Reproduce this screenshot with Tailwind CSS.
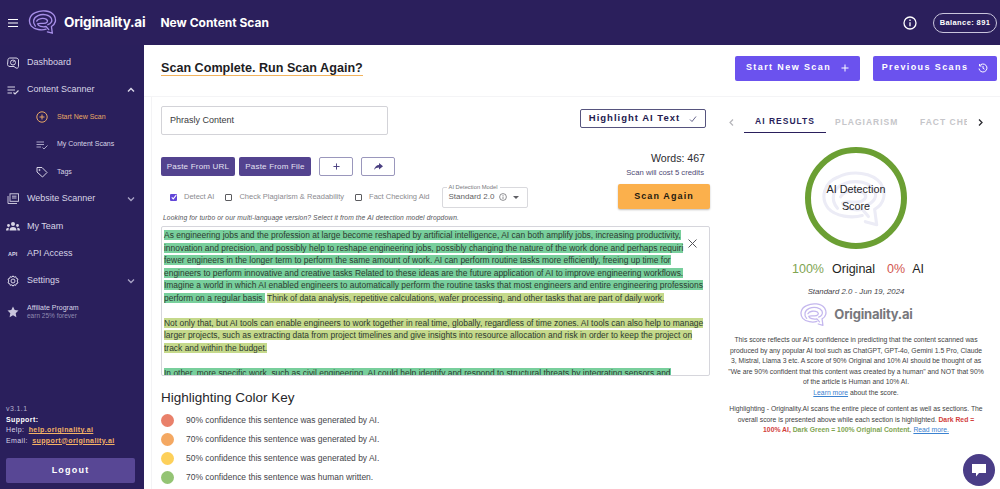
<!DOCTYPE html>
<html lang="en">
  <head>
    <meta charset="UTF-8" />
    <meta name="viewport" content="width=device-width, initial-scale=1.0" />
    <title>New Content Scan</title>
    <script src="https://cdn.jsdelivr.net/npm/@tailwindcss/browser@4"></script>
  </head>
  <body class="h-[489px] w-[1000px] overflow-hidden bg-white font-['Liberation_Sans',Arial,sans-serif]">
    <svg class="hidden">
      <symbol id="brain" viewBox="0 0 32 28">
        <path fill="none" stroke="currentColor" stroke-width="1.5" stroke-linecap="round" stroke-linejoin="round" d="M20 21.5C15 23 7 22 3.500 18C-.5 13 1.500 5.500 8 3C15-.5 25 .5 29 6C32 11 30.500 16 26 18.500L27 26L21.500 24.500" />
        <path fill="none" stroke="currentColor" stroke-width="1.5" stroke-linecap="round" d="M8 18C4.500 14 5.500 8.500 11 6.200C17 3.800 24 5.500 26 9.500C27.500 13 25 15.500 22 16.500" />
        <path fill="none" stroke="currentColor" stroke-width="1.5" stroke-linecap="round" d="M9.500 12.500C11 9.500 17 8.500 20.500 10.500C23 12.500 21 15 17 15C14.500 15 12.500 14.500 10.500 15.500C11 18 16 19.500 20 18.500L23 22" />
      </symbol>
    </svg>

    <header class="flex h-[45px] items-center bg-[#2b1f5c] text-white">
      <svg class="ml-[8px] h-[10px] w-[10px]" viewBox="0 0 10 10" stroke="currentColor" stroke-width="1.200"><path d="M0 1.500H10M0 5H10M0 8.500H10" /></svg>
      <svg class="ml-[10px] h-[25px] w-[29px] text-[#a78fe8]"><use href="#brain" /></svg>
      <span class="ml-[7px] font-['Inter',sans-serif] text-[13.500px] font-bold tracking-[-0.2px]">Originality.ai</span>
      <span class="ml-[15px] font-['Inter',sans-serif] text-[12px] font-bold">New Content Scan</span>
      <svg class="ml-auto h-[14px] w-[14px]" viewBox="0 0 14 14" fill="none" stroke="currentColor" stroke-width="1.300"><circle cx="7" cy="7" r="6" /><path d="M7 6.200V10.200M7 3.600V5" /></svg>
      <div class="mr-[3px] ml-[16px] flex h-[20px] w-[64px] items-center justify-center rounded-full border border-[#c9c5dc] text-[7.500px] font-bold tracking-[0.4px]">Balance: 891</div>
    </header>

    <div class="flex h-[444px]">
      <aside class="flex w-[144px] shrink-0 flex-col bg-[#2a1f5c] pt-[4px] text-[9px] text-[#d8d5e6]">
        <div class="flex h-[27.300px] items-center pl-[7px]">
          <svg class="mr-[8px] h-[12px] w-[12px]" viewBox="0 0 12 12" fill="none" stroke="currentColor"><path d="M1 2.500C1 1.500 2 1 3 1H9C10.500 1 11.500 2 11.500 3V9.500C11.500 11 10 11.500 9 11L7 9.500H3C1.500 9.500 .5 8.500 .5 7.500Z" /><circle cx="6" cy="5.500" r="2.500" /><path d="M6 5.500L7.500 3.800" /></svg>
          <span>Dashboard</span>
        </div>
        <div class="flex h-[27.300px] items-center pl-[7px]">
          <svg class="mr-[8px] h-[12px] w-[12px]" viewBox="0 0 12 12" fill="none" stroke="currentColor" stroke-width="1.200"><path d="M.5 3H8M.5 6H8M.5 9H5M6.500 8.500L8 10L11.500 6.500" /></svg>
          <span>Content Scanner</span>
          <svg class="mr-[9px] ml-auto h-[8px] w-[8px]" viewBox="0 0 8 8" fill="none" stroke="currentColor" stroke-width="1.500"><path d="M1 5.500L4 2.500L7 5.500" /></svg>
        </div>
        <div class="flex h-[27.300px] items-center pl-[36px] text-[7px] text-[#e9a866]">
          <svg class="mr-[9px] h-[12px] w-[12px]" viewBox="0 0 12 12" fill="none" stroke="currentColor"><circle cx="6" cy="6" r="5.200" /><path d="M3.500 6H8.500M6 3.500V8.500" /></svg>
          <span>Start New Scan</span>
        </div>
        <div class="flex h-[27.300px] items-center pl-[36px] text-[7px]">
          <svg class="mr-[9px] h-[12px] w-[12px] text-[#a9a4c6]" viewBox="0 0 12 12" fill="none" stroke="currentColor"><path d="M.5 3H8M.5 5.500H8M.5 8H5M6.500 8.500L8 10L11.500 6.500" /></svg>
          <span>My Content Scans</span>
        </div>
        <div class="flex h-[27.300px] items-center pl-[36px] text-[7px]">
          <svg class="mr-[9px] h-[12px] w-[12px]" viewBox="0 0 12 12" fill="none" stroke="currentColor"><path d="M1 1.500H6L11 6.500L6.500 11L1 6Z" /><circle cx="3.500" cy="4" r=".6" /></svg>
          <span>Tags</span>
        </div>
        <div class="flex h-[27.300px] items-center pl-[7px]">
          <svg class="mr-[8px] h-[12px] w-[12px]" viewBox="0 0 12 12" fill="none" stroke="currentColor" stroke-width=".9"><rect x="3" y=".8" width="8.500" height="7.500" /><path d="M1 3V10.500H10M5 3.200H9.500M5 5H9.500" /></svg>
          <span>Website Scanner</span>
          <svg class="mr-[9px] ml-auto h-[8px] w-[8px] text-[#a9a4c6]" viewBox="0 0 8 8" fill="none" stroke="currentColor" stroke-width="1.300"><path d="M1 2.500L4 5.500L7 2.500" /></svg>
        </div>
        <div class="flex h-[27.300px] items-center pl-[6px]">
          <svg class="mr-[7px] h-[13px] w-[14px]" viewBox="0 0 14 13" fill="currentColor"><circle cx="7" cy="4" r="2" /><circle cx="2.500" cy="5.500" r="1.400" /><circle cx="11.500" cy="5.500" r="1.400" /><path d="M3.500 10.500C3.500 8 5 7 7 7S10.500 8 10.500 10.500ZM0 10.500C0 8.500 1 7.800 2.800 7.800L2.500 10.500ZM14 10.500C14 8.500 13 7.800 11.200 7.800L11.500 10.500Z" /></svg>
          <span>My Team</span>
        </div>
        <div class="flex h-[27.300px] items-center pl-[8px]">
          <span class="mr-[9px] w-[10px] text-[5.500px] font-bold">API</span>
          <span>API Access</span>
        </div>
        <div class="flex h-[27.300px] items-center pl-[7px]">
          <svg class="mr-[8px] h-[12px] w-[12px]" viewBox="0 0 12 12" fill="none" stroke="currentColor"><path d="M6 .8L7 2.200L8.800 1.700L9.300 3.400L11 4L10.200 6L11 8L9.300 8.600L8.800 10.300L7 9.800L6 11.200L5 9.800L3.200 10.300L2.700 8.600L1 8L1.800 6L1 4L2.700 3.400L3.200 1.700L5 2.200Z" /><circle cx="6" cy="6" r="2" /></svg>
          <span>Settings</span>
          <svg class="mr-[9px] ml-auto h-[8px] w-[8px] text-[#a9a4c6]" viewBox="0 0 8 8" fill="none" stroke="currentColor" stroke-width="1.300"><path d="M1 2.500L4 5.500L7 2.500" /></svg>
        </div>
        <div class="mt-[9px] flex items-center pl-[7px]">
          <svg class="mr-[8px] h-[12px] w-[12px] text-[#c9c5dc]" viewBox="0 0 12 12" fill="currentColor"><path d="M6 .5L7.700 4.100L11.500 4.600L8.700 7.300L9.400 11.200L6 9.300L2.600 11.200L3.300 7.300L.5 4.600L4.300 4.100Z" /></svg>
          <div class="leading-[8.500px]">
            <div class="text-[7px]">Affiliate Program</div>
            <div class="text-[6.500px] text-[#8f8ab0]">earn 25% forever</div>
          </div>
        </div>

        <div class="mt-auto px-[6px] text-[7px] leading-[10.500px] tracking-[0.4px]">
          <div class="text-[#b5b1cd]">v3.1.1</div>
          <div class="font-bold text-white">Support:</div>
          <div>Help: <a class="ml-[2px] font-bold text-[#f3b265] underline">help.originality.ai</a></div>
          <div>Email: <a class="ml-[2px] font-bold text-[#f3b265] underline">support@originality.ai</a></div>
        </div>
        <button class="mt-[12px] mr-[9px] mb-[6px] ml-[6px] flex h-[25px] items-center justify-center rounded-[2px] bg-[#584795] text-[9px] font-bold tracking-[1.200px] text-white">Logout</button>
      </aside>

      <main class="min-w-0 flex-1">
        <div class="flex h-[52px] items-center border-b border-[#f4f4f6] pr-[3px] pb-[5px] pl-[17px]">
          <h1 class="border-b border-[#f2b35c] text-[12.600px] leading-[14px] font-bold text-[#1d1d1f]">Scan Complete. Run Scan Again?</h1>
          <button class="ml-auto flex h-[25px] w-[125px] items-center justify-center gap-[10px] rounded-[2px] bg-[#6b52ee] text-[9px] font-bold tracking-[1.400px] text-white">
            Start New Scan
            <svg class="h-[8px] w-[8px]" viewBox="0 0 8 8" stroke="currentColor"><path d="M4 .5V7.500M.5 4H7.500" /></svg>
          </button>
          <button class="ml-[13px] flex h-[25px] w-[124px] items-center justify-center gap-[10px] rounded-[2px] bg-[#6b52ee] text-[9px] font-bold tracking-[1.400px] text-white">
            Previous Scans
            <svg class="h-[10px] w-[10px]" viewBox="0 0 10 10" fill="none" stroke="currentColor"><path d="M1.500 3A4 4 0 1 1 1 5.500M1.500 1V3H3.500M5 3V5.300L6.500 6.200" /></svg>
          </button>
        </div>

        <div class="flex">
          <section class="ml-[7px] h-[392px] w-[569px] shrink-0 border-l border-[#f3f3f5] pl-[9px]">
            <div class="flex pt-[9px] pr-[10px]">
              <div class="flex h-[29px] w-[227px] items-center rounded-[2px] border border-[#d3d3d8] pl-[8px] text-[9px] text-[#3a3a3e]">Phrasly Content</div>
              <button class="mt-[3px] mr-[4px] ml-auto flex h-[19px] w-[126px] items-center justify-center gap-[9px] rounded-[2px] border border-[#56547e] text-[9.500px] font-bold tracking-[1px] text-[#241a4e]">
                Highlight AI Text
                <svg class="h-[8px] w-[8px] text-[#56547e]" viewBox="0 0 8 8" fill="none" stroke="currentColor" stroke-width=".9"><path d="M1 4.500L3 6.500L7 1.500" /></svg>
              </button>
            </div>

            <div class="mt-[14px] flex pr-[10px]">
              <div class="flex-1">
                <div class="flex items-center pt-[8px]">
                  <button class="h-[19px] w-[74px] rounded-[2px] bg-[#53438f] text-[8px] tracking-[0.2px] text-[#e4e1f1]">Paste From URL</button>
                  <button class="ml-[4px] h-[19px] w-[72px] rounded-[2px] bg-[#53438f] text-[8px] tracking-[0.2px] text-[#e4e1f1]">Paste From File</button>
                  <button class="ml-[8px] flex h-[19px] w-[34px] items-center justify-center rounded-[2px] border border-[#9a97bc]">
                    <svg class="h-[7px] w-[7px] text-[#4a3f80]" viewBox="0 0 8 8" stroke="currentColor" stroke-width="1.100"><path d="M4 .5V7.500M.5 4H7.500" /></svg>
                  </button>
                  <button class="ml-[8px] flex h-[19px] w-[34px] items-center justify-center rounded-[2px] border border-[#9a97bc]">
                    <svg class="h-[7px] w-[9px] text-[#4a3f80]" viewBox="0 0 9 7" fill="currentColor"><path d="M5 0L9 3.200L5 6.500V4.500C3 4.500 1.500 5.200 0 7C.5 4 2.500 2 5 2Z" /></svg>
                  </button>
                </div>
                <div class="mt-[10px] flex h-[22px] items-center pl-[9px] text-[7.500px] text-[#8b8b90]">
                  <span class="flex h-[7px] w-[7px] items-center justify-center rounded-[1px] bg-[#6246d8]"><svg class="h-[6px] w-[6px] text-white" viewBox="0 0 8 8" fill="none" stroke="currentColor" stroke-width="1.400"><path d="M1 4.500L3 6.500L7 1.500" /></svg></span>
                  <span class="ml-[7px]">Detect AI</span>
                  <span class="ml-[11px] h-[7px] w-[7px] rounded-[1px] border border-[#5c5c60]"></span>
                  <span class="ml-[7px]">Check Plagiarism &amp; Readability</span>
                  <span class="ml-[11px] h-[7px] w-[7px] rounded-[1px] border border-[#5c5c60]"></span>
                  <span class="ml-[7px]">Fact Checking Aid</span>
                  <div class="relative ml-[12px] flex h-[21px] w-[86px] items-center rounded-[2px] border border-[#d9d9dd] pl-[6px] text-[8px] text-[#5f5f64]">
                    <span class="absolute top-[-4px] left-[4px] bg-white px-[2px] text-[5.800px] leading-[7px] text-[#77777c]">AI Detection Model</span>
                    <span>Standard 2.0</span>
                    <svg class="ml-[5px] h-[8px] w-[8px]" viewBox="0 0 8 8" fill="none" stroke="currentColor" stroke-width=".7"><circle cx="4" cy="4" r="3.400" /><path d="M4 3.500V6M4 2V2.900" /></svg>
                    <span class="ml-[6px] h-0 w-0 border-x-[3px] border-t-[3px] border-x-transparent border-t-[#5f5f64]"></span>
                  </div>
                </div>
              </div>
              <div class="flex w-[92px] flex-col items-end pt-[3px]">
                <div class="mr-[5px] text-[10.600px] leading-[13px] text-[#2b2b30]">Words: 467</div>
                <div class="mt-[3px] mr-[6px] text-[7.700px] leading-[9px] text-[#4f4b75]">Scan will cost 5 credits</div>
                <button class="mt-[7px] h-[25px] w-[92px] rounded-[2px] bg-[#fbb04c] text-[9px] font-bold tracking-[1.100px] text-[#1e1a10] shadow-[0_1px_2px_rgba(0,0,0,0.25)]">Scan Again</button>
              </div>
            </div>

            <p class="mt-[4px] ml-[2px] text-[6.700px] leading-[9px] tracking-[0.12px] text-[#55555a] italic">Looking for turbo or our multi-language version? Select it from the AI detection model dropdown.</p>

            <div class="relative mt-[4px] h-[150px] w-[549px] overflow-hidden rounded-[2px] border border-[#d6d6dc] pt-[2px] pl-[2px] text-[8.450px] leading-[12.500px] whitespace-nowrap text-[#2d3a30]">
              <div><span class="bg-[#78cf9c]">As engineering jobs and the profession at large become reshaped by artificial intelligence, AI can both amplify jobs, increasing productivity,</span></div>
              <div><span class="bg-[#78cf9c]">innovation and precision, and possibly help to reshape engineering jobs, possibly changing the nature of the work done and perhaps requiri</span></div>
              <div><span class="bg-[#78cf9c]">fewer engineers in the longer term to perform the same amount of work. AI can perform routine tasks more efficiently, freeing up time for</span></div>
              <div><span class="bg-[#78cf9c]">engineers to perform innovative and creative tasks Related to these ideas are the future application of AI to improve engineering workflows.</span></div>
              <div><span class="bg-[#78cf9c]">Imagine a world in which AI enabled engineers to automatically perform the routine tasks that most engineers and entire engineering professions</span></div>
              <div><span class="bg-[#78cf9c]">perform on a regular basis.</span> <span class="bg-[#c5d98b]">Think of data analysis, repetitive calculations, wafer processing, and other tasks that are part of daily work.</span></div>
              <div class="h-[12.500px]"></div>
              <div><span class="bg-[#c5d98b]">Not only that, but AI tools can enable engineers to work together in real time, globally, regardless of time zones. AI tools can also help to manage</span></div>
              <div><span class="bg-[#c5d98b]">larger projects, such as extracting data from project timelines and give insights into resource allocation and risk in order to keep the project on</span></div>
              <div><span class="bg-[#c5d98b]">track and within the budget.</span></div>
              <div class="h-[12.500px]"></div>
              <div><span class="bg-[#78cf9c]">In other, more specific work, such as civil engineering, AI could help identify and respond to structural threats by integrating sensors and</span></div>
              <div class="absolute top-[8px] right-[8px] flex h-[17px] w-[17px] items-center justify-center rounded-full bg-white/50">
                <svg class="h-[9px] w-[9px] text-[#55555a]" viewBox="0 0 9 9" stroke="currentColor"><path d="M.5 .5L8.500 8.500M8.500 .5L.5 8.500" /></svg>
              </div>
            </div>

            <h2 class="mt-[13px] text-[13.500px] leading-[17px] text-[#26262a]">Highlighting Color Key</h2>
            <ul class="mt-[5px] text-[8.450px] text-[#45454a]">
              <li class="flex h-[19px] items-center"><span class="h-[13px] w-[13px] rounded-full bg-[#e9806a]"></span><span class="ml-[12px]">90% confidence this sentence was generated by AI.</span></li>
              <li class="flex h-[19px] items-center"><span class="h-[13px] w-[13px] rounded-full bg-[#f4a862]"></span><span class="ml-[12px]">70% confidence this sentence was generated by AI.</span></li>
              <li class="flex h-[19px] items-center"><span class="h-[13px] w-[13px] rounded-full bg-[#fdd05a]"></span><span class="ml-[12px]">50% confidence this sentence was generated by AI.</span></li>
              <li class="flex h-[19px] items-center"><span class="h-[13px] w-[13px] rounded-full bg-[#94c474]"></span><span class="ml-[12px]">70% confidence this sentence was human written.</span></li>
            </ul>
          </section>

          <section class="w-[280px] shrink-0 pr-[14px] pl-[6px]">
            <div class="flex h-[50px] items-center text-[8.500px] font-bold tracking-[1px]">
              <svg class="ml-[3px] h-[7px] w-[5px] text-[#b5b5ba]" viewBox="0 0 5 7" fill="none" stroke="currentColor" stroke-width="1.200"><path d="M4 .5L1 3.500L4 6.500" /></svg>
              <div class="ml-[10px] flex h-[22px] w-[82px] items-center justify-center border-b border-[#2a1f5c] text-[#2a1f5c]">AI RESULTS</div>
              <div class="ml-[9px] w-[66px] text-[#c6c6ca]">PLAGIARISM</div>
              <div class="ml-[19px] w-[47px] overflow-hidden whitespace-nowrap text-[#c6c6ca]">FACT CHECK</div>
              <svg class="ml-[11px] h-[7px] w-[5px] text-[#2a2a30]" viewBox="0 0 5 7" fill="none" stroke="currentColor" stroke-width="1.300"><path d="M1 .5L4 3.500L1 6.500" /></svg>
            </div>

            <div class="relative mx-auto flex h-[102px] w-[102px] items-center justify-center rounded-full border-[6px] border-[#6b9f33] text-center text-[10.800px] leading-[17px] text-[#26262a]">
              <svg class="absolute top-[18px] left-[10px] h-[58px] w-[66px] text-[#ececf6]"><use href="#brain" /></svg>
              <span class="relative">AI Detection<br />Score</span>
            </div>

            <div class="mt-[12px] flex justify-center pl-[4px] text-[12.500px] leading-[16px] text-[#1f1f23]">
              <span class="text-[#7fa552]">100%</span>
              <span class="ml-[8px]">Original</span>
              <span class="ml-[12px] text-[#d2564f]">0%</span>
              <span class="ml-[7px]">AI</span>
            </div>
            <div class="mt-[10px] text-center text-[7.800px] leading-[10px] text-[#45454a] italic">Standard 2.0 - Jun 19, 2024</div>

            <div class="mt-[6px] flex items-center justify-center">
              <svg class="h-[24px] w-[29px] text-[#c4b7ee]"><use href="#brain" /></svg>
              <span class="ml-[6px] font-['Inter',sans-serif] text-[13px] font-bold tracking-[-0.2px] text-[#77777c]">Originality.ai</span>
            </div>

            <p class="mt-[8px] text-center text-[6.800px] leading-[10.500px] text-[#3f3f44]">This score reflects our AI's confidence in predicting that the content scanned was<br />produced by any popular AI tool such as ChatGPT, GPT-4o, Gemini 1.5 Pro, Claude<br />3, Mistral, Llama 3 etc. A score of 90% Original and 10% AI should be thought of as<br />"We are 90% confident that this content was created by a human" and NOT that 90%<br />of the article is Human and 10% AI.<br /><a class="text-[#3b82d0] underline">Learn more</a> about the score.</p>
            <p class="mt-[6px] text-center text-[6.800px] leading-[10.500px] text-[#3f3f44]">Highlighting - Originality.AI scans the entire piece of content as well as sections. The<br />overall score is presented above while each section is highlighted. <b class="text-[#d2403c]">Dark Red =<br />100% AI,</b> <b class="text-[#7fa552]">Dark Green = 100% Original Content.</b> <a class="text-[#3b82d0] underline">Read more.</a></p>
          </section>
        </div>
      </main>
    </div>

    <div class="fixed right-[5px] bottom-[3px] flex h-[32px] w-[32px] items-center justify-center rounded-full bg-[#4a3d87]">
      <svg class="h-[14px] w-[16px] text-white" viewBox="0 0 16 14" fill="currentColor"><path d="M1 1H15V10H8L5 13.500V10H1Z" /></svg>
    </div>
  </body>
</html>
